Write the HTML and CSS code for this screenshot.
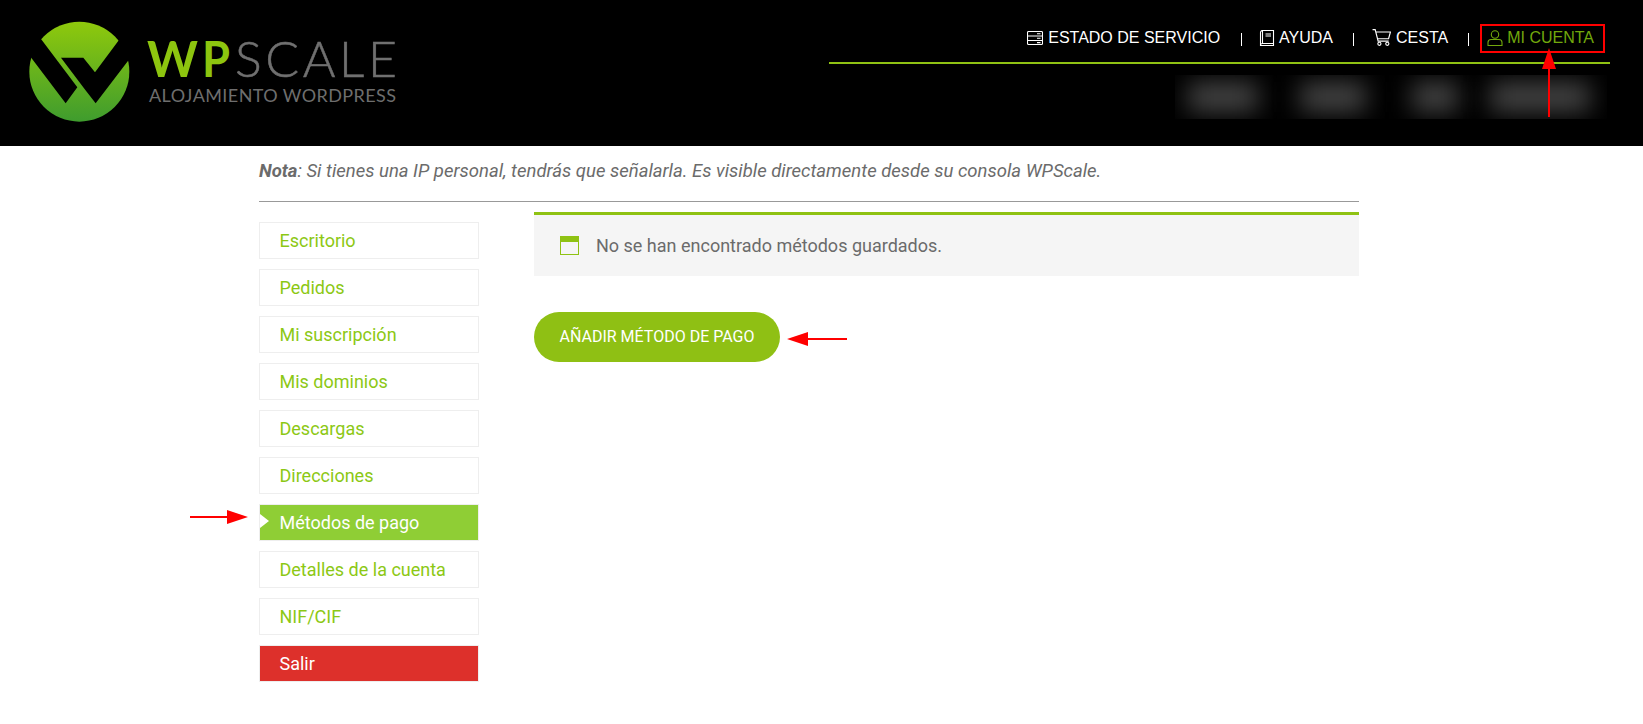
FILE: index.html
```html
<!DOCTYPE html>
<html lang="es">
<head>
    <meta charset="UTF-8">
    <title>Métodos de pago - WPScale</title>
    <link rel="stylesheet" href="styles.css">
</head>
<body>

    <header class="site-header">
        <svg class="logo" width="420" height="146" viewBox="0 0 420 146" role="img" aria-label="WPScale">
            <defs>
                <linearGradient id="logoGreen" x1="0" y1="0" x2="0" y2="1">
                    <stop offset="0" stop-color="#8fc90c"/>
                    <stop offset="1" stop-color="#3f9c2e"/>
                </linearGradient>
            </defs>
            <g transform="translate(20 15) scale(0.3333)">
                <circle cx="178" cy="170" r="150" fill="url(#logoGreen)"/>
                <polygon points="20,110 137,265 172,217 63,72 30,40 0,90" fill="#000"/>
                <polygon points="123,128 190,128 225,172 297,75 340,40 345,110 227,265 196,225" fill="#000"/>
            </g>
            <text class="logo-wp" x="147" y="77" textLength="51" lengthAdjust="spacingAndGlyphs">W</text>
            <text class="logo-wp" x="202" y="77" textLength="28" lengthAdjust="spacingAndGlyphs">P</text>
            <text class="logo-scale" x="235" y="77" textLength="162">SCALE</text>
            <text class="logo-sub" x="149" y="102" textLength="247">ALOJAMIENTO WORDPRESS</text>
        </svg>

        <div class="header-right">
            <nav class="top-nav">
                <a class="nav-link" href="#">
                    <svg class="nav-icon" viewBox="0 0 16 16"><rect x="0.5" y="1.5" width="15" height="13" rx="1"/><path d="M0.5 6h15M0.5 10.500h15M10 3.800h3.500M10 8.200h3.500M10 12.600h3.500"/></svg>
                    ESTADO DE SERVICIO
                </a>
                <span class="nav-sep nav-sep-first"></span>
                <a class="nav-link nav-link-tight" href="#">
                    <svg class="nav-icon" viewBox="0 0 16 16"><path d="M3.500 0.500h11v13h-11a2 2 0 0 0-2 1v-12a2 2 0 0 1 2-2zM3.500 0.500v13M1.500 14.500a1 1 0 0 0 1 1h12v-2M6.500 4h5.500M6.500 6h5.500"/></svg>
                    AYUDA
                </a>
                <span class="nav-sep nav-sep-mid"></span>
                <a class="nav-link" href="#">
                    <svg class="nav-icon nav-icon-cart" viewBox="0 0 18 16"><path d="M0.500 0.500h2.500l2.800 11h10M3.500 2.800h14l-1.800 6.400h-10.400"/><circle cx="7" cy="14" r="1.500"/><circle cx="14.500" cy="14" r="1.500"/></svg>
                    CESTA
                </a>
                <span class="nav-sep nav-sep-last"></span>
                <a class="nav-link nav-link-tight nav-account" href="#">
                    <svg class="nav-icon" viewBox="0 0 16 16"><circle cx="8" cy="4.500" r="3.700"/><path d="M1 15.500v-3a3 3 0 0 1 3-3h8a3 3 0 0 1 3 3v3z"/></svg>
                    MI CUENTA
                </a>
            </nav>
            <div class="blurred-menu">
                <span class="blob blob-a"></span>
                <span class="blob blob-b"></span>
                <span class="blob blob-c"></span>
                <span class="blob blob-d"></span>
            </div>
        </div>
    </header>

    <main class="page">
        <p class="note"><strong>Nota</strong>: Si tienes una IP personal, tendrás que señalarla. Es visible directamente desde su consola WPScale.</p>
        <hr class="rule">

        <div class="account">
            <ul class="account-menu">
                <li><a href="#">Escritorio</a></li>
                <li><a href="#">Pedidos</a></li>
                <li><a href="#">Mi suscripción</a></li>
                <li><a href="#">Mis dominios</a></li>
                <li><a href="#">Descargas</a></li>
                <li><a href="#">Direcciones</a></li>
                <li class="active"><a href="#">Métodos de pago</a></li>
                <li><a href="#">Detalles de la cuenta</a></li>
                <li><a href="#">NIF/CIF</a></li>
                <li class="logout"><a href="#">Salir</a></li>
            </ul>

            <section class="account-content">
                <div class="notice">
                    <span class="notice-icon"></span>
                    <span>No se han encontrado métodos guardados.</span>
                </div>
                <a class="btn" href="#">Añadir método de pago</a>
            </section>
        </div>
    </main>

    <!-- red marks drawn over the capture -->
    <svg class="marks" width="1643" height="724" viewBox="0 0 1643 724">
        <rect x="1481" y="25" width="123" height="27" fill="none" stroke="#f00" stroke-width="2"/>
        <path d="M1548 68h2v49h-2z M1549 48l7 21h-14z" fill="#f00"/>
        <path d="M847 338v2h-40v-2z M787 339l21-7v14z" fill="#f00"/>
        <path d="M190 516v2h38v-2z M248 517l-21-7v14z" fill="#f00"/>
    </svg>

</body>
</html>
```

FILE: styles.css
```css
* {
    margin: 0;
    padding: 0;
    box-sizing: border-box;
}

body {
    font-family: 'Roboto', sans-serif;
    background: #ffffff;
    color: #6b6b6b;
    height: 724px;
    overflow: hidden;
}

a {
    text-decoration: none;
}

.site-header {
    display: flex;
    justify-content: space-between;
    height: 146px;
    padding-right: 33px;
    background: #000000;
}

.logo {
    display: block;
}

.logo text {
    font-family: 'Lato', sans-serif;
}

.logo .logo-wp {
    font-size: 50px;
    font-weight: 700;
    fill: #8dc50f;
}

.logo .logo-scale {
    font-size: 50px;
    font-weight: 300;
    fill: #707070;
    stroke: #707070;
    stroke-width: 0.5px;
}

.logo .logo-sub {
    font-size: 18px;
    fill: #6e6e6e;
}

.header-right {
    width: 781px;
    padding-top: 24px;
}

.top-nav {
    display: flex;
    justify-content: flex-end;
    align-items: center;
    height: 40px;
    padding: 0 6px 11px 0;
    border-bottom: 2px solid #8fc213;
    font-family: 'Liberation Sans', Arial, sans-serif;
    font-size: 16px;
}

.nav-link {
    display: flex;
    align-items: center;
    gap: 5px;
    color: #ffffff;
}

.nav-link-tight {
    gap: 4px;
}

.nav-icon {
    width: 16px;
    height: 16px;
    fill: none;
    stroke: currentColor;
    stroke-width: 1.1;
}

.nav-icon-cart {
    width: 19px;
    height: 17px;
}

.nav-sep {
    width: 1px;
    height: 13px;
    margin: 4px 19px 0 20px;
    background: #ffffff;
}

.nav-sep-first {
    margin-right: 17px;
    margin-left: 21px;
}

.nav-sep-mid {
    margin-right: 18px;
}

.nav-sep-last {
    margin-right: 10px;
}

.nav-account {
    padding: 0 10px 0 8px;
    color: #72a80c;
}

.blurred-menu {
    display: flex;
    width: 432px;
    height: 44px;
    margin: 11px 3px 0 auto;
    padding: 7px 0 0 13px;
    overflow: hidden;
}

.blob {
    display: block;
    flex: none;
    height: 30px;
    background: #444444;
    filter: blur(12px);
}

.blob-a { width: 70px; margin-right: 42px; }
.blob-b { width: 66px; margin-right: 46px; }
.blob-c { width: 46px; margin-right: 32px; }
.blob-d { width: 100px; }

.page {
    width: 1100px;
    margin-left: 259px;
}

.note {
    padding-top: 15px;
    font-size: 18.5px;
    line-height: 20px;
    font-style: italic;
}

.rule {
    height: 1px;
    margin-top: 20px;
    border: none;
    background: #999999;
}

.account {
    display: flex;
    justify-content: space-between;
    margin-top: 10px;
}

.account-menu {
    width: 220px;
    margin-top: 10px;
    list-style: none;
}

.account-menu li {
    height: 37px;
    margin-bottom: 10px;
    border: 1px solid #eeeeee;
}

.account-menu a {
    display: block;
    height: 35px;
    padding-left: 19.5px;
    font-size: 18px;
    line-height: 35px;
    color: #8cc814;
}

.account-menu .active {
    position: relative;
}

.account-menu .active a {
    background: #8fce35;
    color: #ffffff;
}

.account-menu .active::before {
    content: "";
    position: absolute;
    left: 0;
    top: 9px;
    border-top: 7px solid transparent;
    border-bottom: 7px solid transparent;
    border-left: 9px solid #ffffff;
}

.account-menu .logout a {
    background: #dd302b;
    color: #ffffff;
}

.account-content {
    width: 825px;
}

.notice {
    display: flex;
    align-items: center;
    gap: 17px;
    height: 64px;
    padding-left: 26px;
    border-top: 3px solid #8fc213;
    background: #f5f5f5;
    font-size: 18px;
}

.notice-icon {
    display: block;
    width: 19px;
    height: 19px;
    border: 1px solid #8fc213;
    border-top-width: 6px;
}

.btn {
    display: block;
    width: 246px;
    height: 50px;
    margin-top: 36px;
    border-radius: 25px;
    background: #8fc014;
    color: #ffffff;
    font-size: 16px;
    line-height: 50px;
    text-align: center;
    text-transform: uppercase;
}

.marks {
    position: absolute;
    left: 0;
    top: 0;
    pointer-events: none;
}
```
